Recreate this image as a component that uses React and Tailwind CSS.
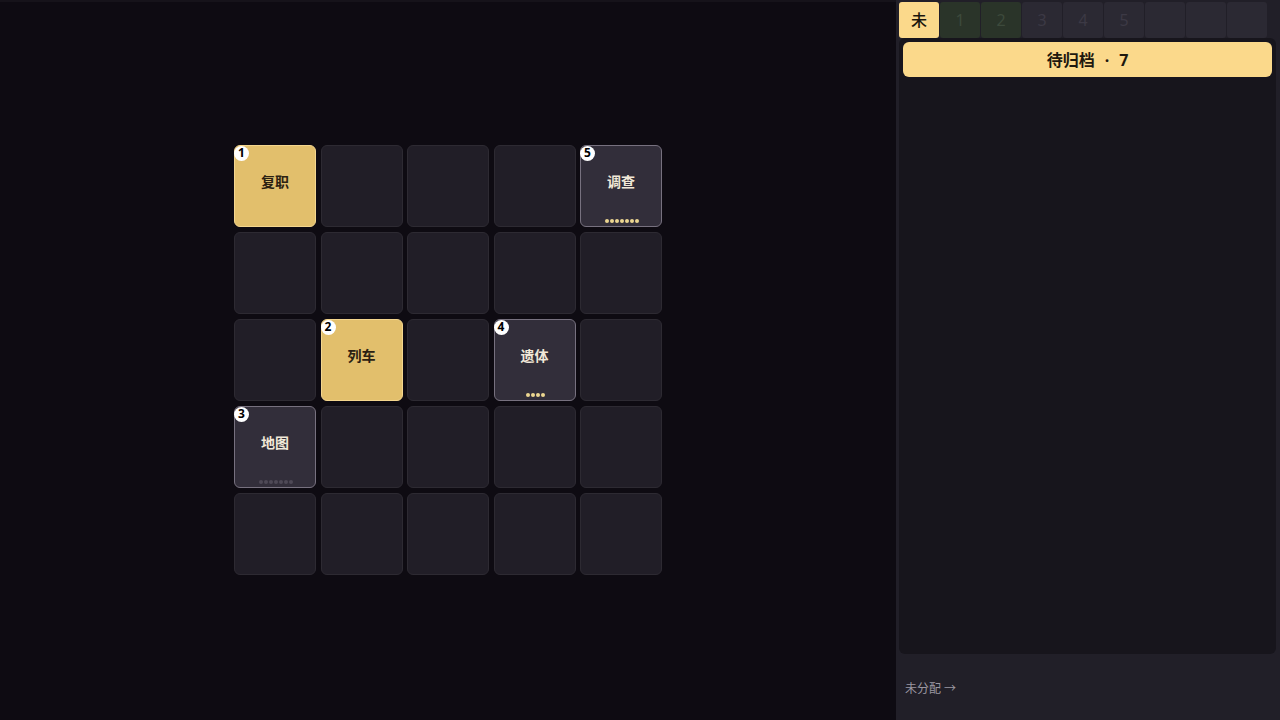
import React from "react";

const cells = {
  0: { kind: "gold", label: "复职", n: 1 },
  4: { kind: "gray", label: "调查", n: 5, dots: 7, lit: true },
  11: { kind: "gold", label: "列车", n: 2 },
  13: { kind: "gray", label: "遗体", n: 4, dots: 4, lit: true },
  15: { kind: "gray", label: "地图", n: 3, dots: 7, lit: false },
};

function Cell({ c }) {
  if (!c) {
    return <div className="w-[82px] h-[82px] rounded-[6px] bg-[#211e27] border border-[#2d2a32]" />;
  }
  const gold = c.kind === "gold";
  return (
    <div
      className={
        "relative w-[82px] h-[82px] rounded-[6px] border flex items-center justify-center pb-[8px] " +
        (gold ? "bg-[#e2bf6c] border-[#f4d68e]" : "bg-[#322e3a] border-[#77717f]")
      }
    >
      <span
        className={
          "text-[14px] font-bold " + (gold ? "text-[#2b2112]" : "text-[#f1e8d8]")
        }
      >
        {c.label}
      </span>
      <div className="absolute left-[-1px] top-[0px] w-[15px] h-[15px] rounded-full bg-white flex items-center justify-center">
        <span className="text-[12px] font-bold text-black leading-none">{c.n}</span>
      </div>
      {c.dots ? (
        <div className="absolute bottom-[3px] left-[1px] right-0 flex justify-center gap-[1px]">
          {Array.from({ length: c.dots }).map((_, i) => (
            <div
              key={i}
              className={"w-[4px] h-[4px] rounded-full " + (c.lit ? "bg-[#ecd690]" : "bg-[#4e4956]")}
            />
          ))}
        </div>
      ) : null}
    </div>
  );
}

const tabs = [
  { t: "未", kind: "active" },
  { t: "1", kind: "green" },
  { t: "2", kind: "green" },
  { t: "3", kind: "plain" },
  { t: "4", kind: "plain" },
  { t: "5", kind: "plain" },
  { t: "", kind: "plain" },
  { t: "", kind: "plain" },
  { t: "", kind: "plain" },
];

export default function App() {
  return (
    <div
      className="w-[1280px] h-[720px] flex bg-[#0e0b12] overflow-hidden"
      style={{ fontFamily: '"Noto Sans", "Noto Sans CJK SC", sans-serif' }}
    >
      <div className="w-[896px] h-full flex flex-col">
        <div className="h-[2px] bg-[#16131a]" />
        <div className="flex-1 flex items-center justify-center pb-[3px]">
          <div className="grid grid-cols-5 gap-x-[4.5px] gap-y-[5px] w-[428px]">
            {Array.from({ length: 25 }).map((_, i) => (
              <Cell key={i} c={cells[i]} />
            ))}
          </div>
        </div>
      </div>
      <div className="w-[384px] h-full bg-[#211f28] flex flex-col pl-[3px] pr-[4px] pt-[2px]">
        <div className="flex gap-[1px] h-[36px]">
          {tabs.map((tb, i) => (
            <div
              key={i}
              className={
                "w-[40px] h-[36px] rounded-[3px] flex items-center justify-center text-[16px] " +
                (tb.kind === "active"
                  ? "bg-[#fbd98b] text-[#1c160c] font-medium"
                  : tb.kind === "green"
                  ? "bg-[#2a3429] text-[#3d4a3c]"
                  : "bg-[#2b2933] text-[#3c3945]")
              }
            >
              {tb.t}
            </div>
          ))}
        </div>
        <div className="h-[616px] bg-[#17151c] rounded-[6px] p-[4px]">
          <div className="h-[35px] rounded-[6px] bg-[#fbd98b] flex items-center justify-center text-[16px] font-bold text-[#1e180e]">
            <span>待归档</span>
            <span className="mx-[10px]">·</span>
            <span>7</span>
          </div>
        </div>
        <div className="pt-[21px] pl-[6px]">
          <span className="text-[12px] text-[#9b97a1]">未分配 →</span>
        </div>
      </div>
    </div>
  );
}
